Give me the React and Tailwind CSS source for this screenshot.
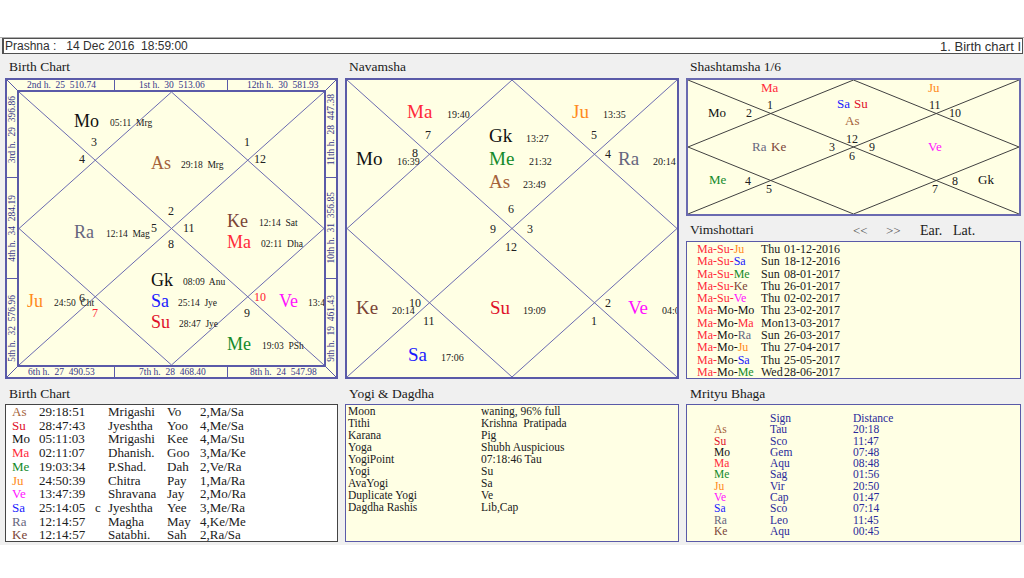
const C = {
  As: "text-[#a5623a]", Su: "text-[#e0102a]", Mo: "text-[#101010]", Ma: "text-[#ff2a3a]", Me: "text-[#138a2a]",
  Ju: "text-[#ff8a20]", Ve: "text-[#ff10ff]", Sa: "text-[#1a1aff]", Ra: "text-[#66667e]", Ke: "text-[#7a4436]", Gk: "text-[#101010]",
};
const RED = "text-[#ff2030]";
const INK = "text-[#202020]";

function L({ c, children }) {
  return <span className={"absolute leading-none whitespace-pre " + c}>{children}</span>;
}

function Diagram({ w, h, stroke }) {
  const cx = w / 2, cy = h / 2;
  return (
    <svg className="absolute inset-0 w-full h-full" viewBox={`0 0 ${w} ${h}`} fill="none" stroke={stroke} strokeWidth="1">
      <path d={`M0 0L${w} ${h}M${w} 0L0 ${h}M${cx} 0L${w} ${cy}L${cx} ${h}L0 ${cy}Z`} />
    </svg>
  );
}

function Corner({ d }) {
  return (
    <svg className="w-[10px] h-[10px] bg-[#ffffe4]" viewBox="0 0 10 10" stroke="#5a5aa8" strokeWidth="1">
      <path d={d} />
    </svg>
  );
}

function HStrip({ items, pads }) {
  return (
    <div className="grid grid-cols-[97px_114px_98px] bg-[#ffffe4] text-[9.5px] leading-[10px] text-[#35358a] whitespace-pre">
      <div className={pads[0]}>{items[0]}</div>
      <div className={"border-x border-[#5a5aa8] " + pads[1]}>{items[1]}</div>
      <div className={pads[2]}>{items[2]}</div>
    </div>
  );
}

function VStrip({ items }) {
  return (
    <div className="grid grid-rows-[87px_102px_88px] bg-[#ffffe4] text-[9.5px] leading-[10px] text-[#35358a] whitespace-pre">
      <div className="flex items-center justify-center pb-[8px]">
        <span className="[writing-mode:vertical-rl] rotate-180">{items[0]}</span>
      </div>
      <div className="flex items-center justify-center border-y border-[#5a5aa8]">
        <span className="[writing-mode:vertical-rl] rotate-180">{items[1]}</span>
      </div>
      <div className="flex items-center justify-center pt-[10px]">
        <span className="[writing-mode:vertical-rl] rotate-180">{items[2]}</span>
      </div>
    </div>
  );
}

function BirthChart() {
  const B = "text-[18px] ";
  const S = "text-[9.5px] " + INK + " ";
  const N = "text-[12px] " + INK + " ";
  return (
    <div className="w-[333px] h-[301px] border-2 border-[#5a5aa8] grid grid-cols-[10px_309px_10px] grid-rows-[10px_277px_10px]">
      <Corner d="M0 0L10 10" />
      <HStrip items={["2nd h.  25  510.74", "1st h.  30  513.06", "12th h.  30  581.93"]} pads={["pl-[10px]", "pl-[24px]", "pl-[19px]"]} />
      <Corner d="M10 0L0 10" />
      <VStrip items={["3rd h.  29  396.86", "4th h.  34  284.19", "5th h.  32  576.96"]} />
      <div className="relative overflow-hidden bg-[#ffffe4] border-2 border-[#5a5aa8]">
        <Diagram w={305} h={273} stroke="#6a6ab0" />
        <L c={B + C.Mo + " left-[55px] top-[20px]"}>Mo</L>
        <L c={B + C.As + " left-[132px] top-[62px]"}>As</L>
        <L c={B + C.Ra + " left-[55px] top-[131px]"}>Ra</L>
        <L c={B + C.Ke + " left-[208px] top-[120px]"}>Ke</L>
        <L c={B + C.Ma + " left-[208px] top-[141px]"}>Ma</L>
        <L c={B + C.Gk + " left-[132px] top-[179px]"}>Gk</L>
        <L c={B + C.Sa + " left-[132px] top-[200px]"}>Sa</L>
        <L c={B + C.Su + " left-[132px] top-[221px]"}>Su</L>
        <L c={B + C.Me + " left-[208px] top-[243px]"}>Me</L>
        <L c={B + C.Ju + " left-[8px] top-[200px]"}>Ju</L>
        <L c={B + C.Ve + " left-[260px] top-[200px]"}>Ve</L>
        <L c={S + "left-[91px] top-[27px]"}>05:11  Mrg</L>
        <L c={S + "left-[162px] top-[69px]"}>29:18  Mrg</L>
        <L c={S + "left-[87px] top-[138px]"}>12:14  Mag</L>
        <L c={S + "left-[240px] top-[127px]"}>12:14  Sat</L>
        <L c={S + "left-[242px] top-[148px]"}>02:11  Dha</L>
        <L c={S + "left-[164px] top-[186px]"}>08:09  Anu</L>
        <L c={S + "left-[159px] top-[207px]"}>25:14  Jye</L>
        <L c={S + "left-[160px] top-[228px]"}>28:47  Jye</L>
        <L c={S + "left-[243px] top-[250px]"}>19:03  PSh</L>
        <L c={S + "left-[35px] top-[207px]"}>24:50  Cht</L>
        <L c={S + "left-[289px] top-[207px]"}>13:47</L>
        <L c={N + "left-[72px] top-[44px]"}>3</L>
        <L c={N + "left-[60px] top-[61px]"}>4</L>
        <L c={N + "left-[225px] top-[44px]"}>1</L>
        <L c={N + "left-[235px] top-[61px]"}>12</L>
        <L c={N + "left-[149px] top-[113px]"}>2</L>
        <L c={N + "left-[132px] top-[130px]"}>5</L>
        <L c={N + "left-[164px] top-[130px]"}>11</L>
        <L c={N + "left-[149px] top-[146px]"}>8</L>
        <L c={N + "left-[60px] top-[200px]"}>6</L>
        <L c={"text-[12px] " + RED + " left-[73px] top-[215px]"}>7</L>
        <L c={"text-[12px] " + RED + " left-[235px] top-[199px]"}>10</L>
        <L c={N + "left-[225px] top-[215px]"}>9</L>
      </div>
      <VStrip items={["11th h.  28  447.38", "10th h.  31  356.85", "9th h.  19  461.43"]} />
      <Corner d="M0 10L10 0" />
      <HStrip items={["6th h.  27  490.53", "7th h.  28  468.40", "8th h.  24  547.98"]} pads={["pl-[11px]", "pl-[24px]", "pl-[22px]"]} />
      <Corner d="M0 0L10 10" />
    </div>
  );
}

function Navamsha() {
  const B = "text-[19px] ";
  const S = "text-[10px] " + INK + " ";
  const N = "text-[12px] " + INK + " ";
  return (
    <div className="relative w-[334px] h-[301px] border-2 border-[#5a5aa8] bg-[#ffffe4] overflow-hidden">
      <Diagram w={330} h={297} stroke="#6a6ab0" />
      <L c={B + C.Ma + " left-[60px] top-[22px]"}>Ma</L>
      <L c={S + "left-[100px] top-[30px]"}>19:40</L>
      <L c={B + C.Ju + " left-[225px] top-[22px]"}>Ju</L>
      <L c={S + "left-[256px] top-[30px]"}>13:35</L>
      <L c={N + "left-[78px] top-[49px]"}>7</L>
      <L c={N + "left-[244px] top-[49px]"}>5</L>
      <L c={B + C.Mo + " left-[9px] top-[69px]"}>Mo</L>
      <L c={S + "left-[50px] top-[77px]"}>16:39</L>
      <L c={N + "left-[65px] top-[67px]"}>8</L>
      <L c={N + "left-[258px] top-[68px]"}>4</L>
      <L c={B + C.Ra + " left-[271px] top-[69px]"}>Ra</L>
      <L c={S + "left-[306px] top-[77px]"}>20:14</L>
      <L c={B + C.Gk + " left-[142px] top-[46px]"}>Gk</L>
      <L c={S + "left-[179px] top-[54px]"}>13:27</L>
      <L c={B + C.Me + " left-[142px] top-[69px]"}>Me</L>
      <L c={S + "left-[182px] top-[77px]"}>21:32</L>
      <L c={B + C.As + " left-[142px] top-[92px]"}>As</L>
      <L c={S + "left-[176px] top-[100px]"}>23:49</L>
      <L c={N + "left-[161px] top-[123px]"}>6</L>
      <L c={N + "left-[143px] top-[143px]"}>9</L>
      <L c={N + "left-[180px] top-[143px]"}>3</L>
      <L c={N + "left-[158px] top-[161px]"}>12</L>
      <L c={B + C.Ke + " left-[9px] top-[218px]"}>Ke</L>
      <L c={S + "left-[45px] top-[226px]"}>20:14</L>
      <L c={N + "left-[62px] top-[217px]"}>10</L>
      <L c={N + "left-[76px] top-[235px]"}>11</L>
      <L c={B + C.Su + " left-[143px] top-[218px]"}>Su</L>
      <L c={S + "left-[176px] top-[226px]"}>19:09</L>
      <L c={N + "left-[258px] top-[217px]"}>2</L>
      <L c={N + "left-[244px] top-[235px]"}>1</L>
      <L c={B + C.Ve + " left-[281px] top-[218px]"}>Ve</L>
      <L c={S + "left-[315px] top-[226px]"}>04:03</L>
      <L c={B + C.Sa + " left-[61px] top-[265px]"}>Sa</L>
      <L c={S + "left-[94px] top-[273px]"}>17:06</L>
    </div>
  );
}

function Shashtamsha() {
  const P = "text-[13px] ";
  const N = "text-[12px] " + INK + " ";
  return (
    <div className="relative w-[335px] h-[138px] border-2 border-[#6a6ab0] bg-[#ffffe4] overflow-hidden">
      <Diagram w={331} h={134} stroke="#404040" />
      <L c={P + C.Ma + " left-[73px] top-[1px]"}>Ma</L>
      <L c={P + C.Ju + " left-[240px] top-[1px]"}>Ju</L>
      <L c={N + "left-[79px] top-[19px]"}>1</L>
      <L c={N + "left-[58px] top-[27px]"}>2</L>
      <L c={P + C.Mo + " left-[20px] top-[26px]"}>Mo</L>
      <L c={P + C.Sa + " left-[149px] top-[17px]"}>Sa</L>
      <L c={P + C.Su + " left-[166px] top-[17px]"}>Su</L>
      <L c={P + C.As + " left-[157px] top-[34px]"}>As</L>
      <L c={N + "left-[241px] top-[19px]"}>11</L>
      <L c={N + "left-[261px] top-[27px]"}>10</L>
      <L c={P + C.Ra + " left-[64px] top-[60px]"}>Ra</L>
      <L c={P + C.Ke + " left-[83px] top-[60px]"}>Ke</L>
      <L c={N + "left-[141px] top-[61px]"}>3</L>
      <L c={N + "left-[158px] top-[53px]"}>12</L>
      <L c={N + "left-[181px] top-[61px]"}>9</L>
      <L c={N + "left-[161px] top-[70px]"}>6</L>
      <L c={P + C.Ve + " left-[240px] top-[60px]"}>Ve</L>
      <L c={P + C.Me + " left-[21px] top-[93px]"}>Me</L>
      <L c={N + "left-[57px] top-[95px]"}>4</L>
      <L c={N + "left-[78px] top-[103px]"}>5</L>
      <L c={P + C.Gk + " left-[290px] top-[93px]"}>Gk</L>
      <L c={N + "left-[264px] top-[95px]"}>8</L>
      <L c={N + "left-[244px] top-[103px]"}>7</L>
    </div>
  );
}

const positions = [
  ["As", "29:18:51", "", "Mrigashi", "Vo", "2,Ma/Sa"],
  ["Su", "28:47:43", "", "Jyeshtha", "Yoo", "4,Me/Sa"],
  ["Mo", "05:11:03", "", "Mrigashi", "Kee", "4,Ma/Su"],
  ["Ma", "02:11:07", "", "Dhanish.", "Goo", "3,Ma/Ke"],
  ["Me", "19:03:34", "", "P.Shad.", "Dah", "2,Ve/Ra"],
  ["Ju", "24:50:39", "", "Chitra", "Pay", "1,Ma/Ra"],
  ["Ve", "13:47:39", "", "Shravana", "Jay", "2,Mo/Ra"],
  ["Sa", "25:14:05", "c", "Jyeshtha", "Yee", "3,Me/Ra"],
  ["Ra", "12:14:57", "", "Magha", "May", "4,Ke/Me"],
  ["Ke", "12:14:57", "", "Satabhi.", "Sah", "2,Ra/Sa"],
];

const yogi = [
  ["Moon", "waning, 96% full"],
  ["Tithi", "Krishna  Pratipada"],
  ["Karana", "Pig"],
  ["Yoga", "Shubh Auspicious"],
  ["YogiPoint", "07:18:46 Tau"],
  ["Yogi", "Su"],
  ["AvaYogi", "Sa"],
  ["Duplicate Yogi", "Ve"],
  ["Dagdha Rashis", "Lib,Cap"],
];

const mrityu = [
  ["As", "Tau", "20:18"], ["Su", "Sco", "11:47"], ["Mo", "Gem", "07:48"], ["Ma", "Aqu", "08:48"], ["Me", "Sag", "01:56"],
  ["Ju", "Vir", "20:50"], ["Ve", "Cap", "01:47"], ["Sa", "Sco", "07:14"], ["Ra", "Leo", "11:45"], ["Ke", "Aqu", "00:45"],
];

const dasha = [
  ["Ma", "Su", "Ju", "Thu", "01-12-2016"], ["Ma", "Su", "Sa", "Sun", "18-12-2016"], ["Ma", "Su", "Me", "Sun", "08-01-2017"],
  ["Ma", "Su", "Ke", "Thu", "26-01-2017"], ["Ma", "Su", "Ve", "Thu", "02-02-2017"], ["Ma", "Mo", "Mo", "Thu", "23-02-2017"],
  ["Ma", "Mo", "Ma", "Mon", "13-03-2017"], ["Ma", "Mo", "Ra", "Sun", "26-03-2017"], ["Ma", "Mo", "Ju", "Thu", "27-04-2017"],
  ["Ma", "Mo", "Sa", "Thu", "25-05-2017"], ["Ma", "Mo", "Me", "Wed", "28-06-2017"],
];

const dashaColor = { Ma: C.Ma, Su: C.Ma, Mo: C.Mo, Ju: C.Ju, Sa: C.Sa, Me: C.Me, Ke: C.Ke, Ve: C.Ve, Ra: C.Ra };

function Title({ children, className = "h-[24px] pt-[4px]" }) {
  return <div className={"text-[13.5px] leading-[17px] text-[#202020] pl-[4px] " + className}>{children}</div>;
}

export default function App() {
  return (
    <div className="w-[1024px] h-[578px] bg-white overflow-hidden pt-[37px] font-['Liberation_Serif',serif]">
      <div className="h-[508px] bg-[#f0f0f0] border-t border-[#b0b0b0]">
        <div className="ml-[2px] w-[1021px] h-[16px] bg-white border-t border-l-2 border-r border-b border-[#505050] flex items-center justify-between pl-[1px] pr-[1px] font-['Liberation_Sans',sans-serif] leading-none text-[#303030] whitespace-pre">
          <span className="text-[12px]">Prashna :   14 Dec 2016  18:59:00</span>
          <span className="text-[13px]">1. Birth chart I</span>
        </div>
        <div className="flex gap-[7px] pl-[5px]">
          <div className="w-[333px]">
            <Title>Birth Chart</Title>
            <BirthChart />
            <Title className="h-[25px] pt-[6px]">Birth Chart</Title>
            <div className="h-[138px] bg-white border border-[#444] pl-[6px] text-[13px] leading-[13.7px] text-[#202020] overflow-hidden">
              {positions.map((r) => (
                <div key={r[0]} className="grid grid-cols-[27px_56px_13px_59px_33px_1fr] whitespace-pre">
                  <span className={C[r[0]]}>{r[0]}</span>
                  <span>{r[1]}</span>
                  <span>{r[2]}</span>
                  <span>{r[3]}</span>
                  <span>{r[4]}</span>
                  <span>{r[5]}</span>
                </div>
              ))}
            </div>
          </div>
          <div className="w-[334px]">
            <Title>Navamsha</Title>
            <Navamsha />
            <Title className="h-[25px] pt-[6px]">Yogi &amp; Dagdha</Title>
            <div className="h-[138px] bg-[#ffffe4] border border-[#5a5aa8] pl-[2px] text-[11.5px] leading-[12px] text-[#202020]">
              {yogi.map((r) => (
                <div key={r[0]} className="grid grid-cols-[133px_1fr] whitespace-pre">
                  <span>{r[0]}</span>
                  <span>{r[1]}</span>
                </div>
              ))}
            </div>
          </div>
          <div className="w-[335px]">
            <Title>Shashtamsha 1/6</Title>
            <Shashtamsha />
            <div className="h-[25px] pt-[5px] pl-[4px] flex items-start text-[#202020] whitespace-pre">
              <span className="w-[163px] text-[13.5px] leading-[17px]">Vimshottari</span>
              <span className="w-[33px] text-[13px] leading-[20px] text-[#555]">&lt;&lt;</span>
              <span className="w-[34px] text-[13px] leading-[20px] text-[#555]">&gt;&gt;</span>
              <span className="w-[33px] text-[14px] leading-[20px]">Ear.</span>
              <span className="text-[14px] leading-[20px]">Lat.</span>
            </div>
            <div className="h-[138px] bg-[#ffffe4] border border-[#5a5aa8] pl-[10px] pt-[1px] text-[12px] leading-[12.3px] text-[#202020] overflow-hidden">
              {dasha.map((r) => (
                <div key={r[4]} className="grid grid-cols-[64px_23px_1fr] whitespace-pre">
                  <span>
                    <span className={dashaColor[r[0]]}>{r[0]}-</span>
                    <span className={dashaColor[r[1]]}>{r[1]}-</span>
                    <span className={dashaColor[r[2]]}>{r[2]}</span>
                  </span>
                  <span>{r[3]}</span>
                  <span>{r[4]}</span>
                </div>
              ))}
            </div>
            <Title className="h-[25px] pt-[6px]">Mrityu Bhaga</Title>
            <div className="h-[138px] bg-[#ffffe4] border border-[#5a5aa8] pl-[27px] pt-[8px] text-[11.5px] leading-[11.3px] text-[#2a2a9a]">
              <div className="grid grid-cols-[56px_83px_1fr]">
                <span></span>
                <span>Sign</span>
                <span>Distance</span>
              </div>
              {mrityu.map((r) => (
                <div key={r[0]} className="grid grid-cols-[56px_83px_1fr]">
                  <span className={C[r[0]]}>{r[0]}</span>
                  <span>{r[1]}</span>
                  <span>{r[2]}</span>
                </div>
              ))}
            </div>
          </div>
        </div>
      </div>
    </div>
  );
}
